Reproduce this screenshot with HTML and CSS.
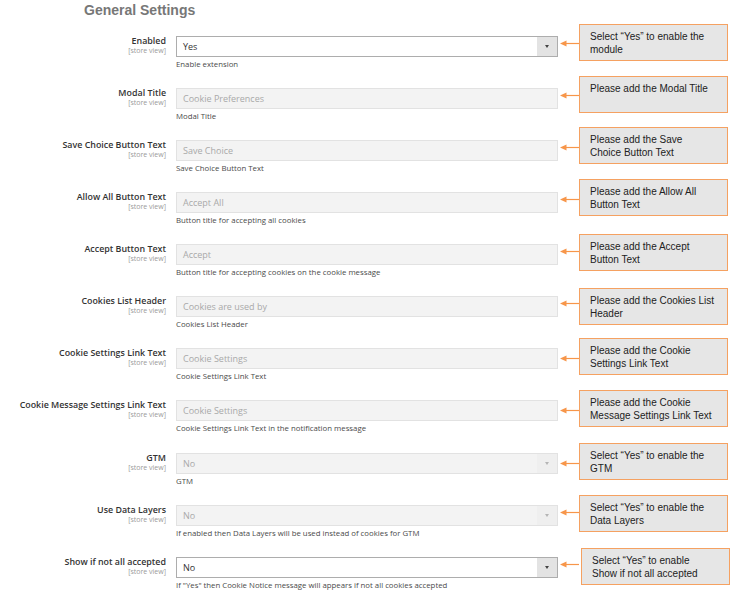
FILE: index.html
```html
<!DOCTYPE html>
<html>
<head>
<meta charset="utf-8">
<link rel="stylesheet" href="styles.css">
</head>
<body>
<div class="page">
  <h2 class="title">General Settings</h2>

  <div class="row">
    <div class="label"><div class="name">Enabled</div><div class="scope">[store view]</div></div>
    <div class="control">
      <div class="field select active"><span class="value">Yes</span><span class="btn"><span class="caret"></span></span></div>
      <div class="note">Enable extension</div>
    </div>
    <svg class="arrow" width="20" height="9" viewBox="0 0 20 9"><line x1="6" y1="4.5" x2="20" y2="4.5"/><polygon points="1,4.5 7.5,1.5 7.5,7.5"/></svg>
    <div class="callout up">Select “Yes” to enable the module</div>
  </div>

  <div class="row">
    <div class="label"><div class="name">Modal Title</div><div class="scope">[store view]</div></div>
    <div class="control">
      <div class="field"><span class="value">Cookie Preferences</span></div>
      <div class="note">Modal Title</div>
    </div>
    <svg class="arrow" width="20" height="9" viewBox="0 0 20 9"><line x1="6" y1="4.5" x2="20" y2="4.5"/><polygon points="1,4.5 7.5,1.5 7.5,7.5"/></svg>
    <div class="callout up">Please add the Modal Title</div>
  </div>

  <div class="row">
    <div class="label"><div class="name">Save Choice Button Text</div><div class="scope">[store view]</div></div>
    <div class="control">
      <div class="field"><span class="value">Save Choice</span></div>
      <div class="note">Save Choice Button Text</div>
    </div>
    <svg class="arrow" width="20" height="9" viewBox="0 0 20 9"><line x1="6" y1="4.5" x2="20" y2="4.5"/><polygon points="1,4.5 7.5,1.5 7.5,7.5"/></svg>
    <div class="callout up2">Please add the Save Choice Button Text</div>
  </div>

  <div class="row">
    <div class="label"><div class="name">Allow All Button Text</div><div class="scope">[store view]</div></div>
    <div class="control">
      <div class="field"><span class="value">Accept All</span></div>
      <div class="note">Button title for accepting all cookies</div>
    </div>
    <svg class="arrow" width="20" height="9" viewBox="0 0 20 9"><line x1="6" y1="4.5" x2="20" y2="4.5"/><polygon points="1,4.5 7.5,1.5 7.5,7.5"/></svg>
    <div class="callout up2">Please add the Allow All Button Text</div>
  </div>

  <div class="row">
    <div class="label"><div class="name">Accept Button Text</div><div class="scope">[store view]</div></div>
    <div class="control">
      <div class="field"><span class="value">Accept</span></div>
      <div class="note">Button title for accepting cookies on the cookie message</div>
    </div>
    <svg class="arrow" width="20" height="9" viewBox="0 0 20 9"><line x1="6" y1="4.5" x2="20" y2="4.5"/><polygon points="1,4.5 7.5,1.5 7.5,7.5"/></svg>
    <div class="callout">Please add the Accept Button Text</div>
  </div>

  <div class="row">
    <div class="label"><div class="name">Cookies List Header</div><div class="scope">[store view]</div></div>
    <div class="control">
      <div class="field"><span class="value">Cookies are used by</span></div>
      <div class="note">Cookies List Header</div>
    </div>
    <svg class="arrow" width="20" height="9" viewBox="0 0 20 9"><line x1="6" y1="4.5" x2="20" y2="4.5"/><polygon points="1,4.5 7.5,1.5 7.5,7.5"/></svg>
    <div class="callout down">Please add the Cookies List Header</div>
  </div>

  <div class="row">
    <div class="label"><div class="name">Cookie Settings Link Text</div><div class="scope">[store view]</div></div>
    <div class="control">
      <div class="field"><span class="value">Cookie Settings</span></div>
      <div class="note">Cookie Settings Link Text</div>
    </div>
    <svg class="arrow low" width="20" height="9" viewBox="0 0 20 9"><line x1="6" y1="4.5" x2="20" y2="4.5"/><polygon points="1,4.5 7.5,1.5 7.5,7.5"/></svg>
    <div class="callout">Please add the Cookie Settings Link Text</div>
  </div>

  <div class="row">
    <div class="label"><div class="name">Cookie Message Settings Link Text</div><div class="scope">[store view]</div></div>
    <div class="control">
      <div class="field"><span class="value">Cookie Settings</span></div>
      <div class="note">Cookie Settings Link Text in the notification message</div>
    </div>
    <svg class="arrow low" width="20" height="9" viewBox="0 0 20 9"><line x1="6" y1="4.5" x2="20" y2="4.5"/><polygon points="1,4.5 7.5,1.5 7.5,7.5"/></svg>
    <div class="callout">Please add the Cookie Message Settings Link Text</div>
  </div>

  <div class="row gap">
    <div class="label"><div class="name">GTM</div><div class="scope">[store view]</div></div>
    <div class="control">
      <div class="field select"><span class="value">No</span><span class="btn"><span class="caret"></span></span></div>
      <div class="note">GTM</div>
    </div>
    <svg class="arrow low" width="20" height="9" viewBox="0 0 20 9"><line x1="6" y1="4.5" x2="20" y2="4.5"/><polygon points="1,4.5 7.5,1.5 7.5,7.5"/></svg>
    <div class="callout">Select “Yes” to enable the GTM</div>
  </div>

  <div class="row">
    <div class="label"><div class="name">Use Data Layers</div><div class="scope">[store view]</div></div>
    <div class="control">
      <div class="field select"><span class="value">No</span><span class="btn"><span class="caret"></span></span></div>
      <div class="note">If enabled then Data Layers will be used instead of cookies for GTM</div>
    </div>
    <svg class="arrow" width="20" height="9" viewBox="0 0 20 9"><line x1="6" y1="4.5" x2="20" y2="4.5"/><polygon points="1,4.5 7.5,1.5 7.5,7.5"/></svg>
    <div class="callout">Select “Yes” to enable the Data Layers</div>
  </div>

  <div class="row">
    <div class="label"><div class="name">Show if not all accepted</div><div class="scope">[store view]</div></div>
    <div class="control">
      <div class="field select active"><span class="value">No</span><span class="btn"><span class="caret"></span></span></div>
      <div class="note">If "Yes" then Cookie Notice message will appears if not all cookies accepted</div>
    </div>
    <svg class="arrow" width="20" height="9" viewBox="0 0 20 9"><line x1="6" y1="4.5" x2="20" y2="4.5"/><polygon points="1,4.5 7.5,1.5 7.5,7.5"/></svg>
    <div class="callout shift">Select “Yes” to enable Show if not all accepted</div>
  </div>
</div>
</body>
</html>
```

FILE: styles.css
```css
html, body {
  margin: 0;
  padding: 0;
  background: #ffffff;
}

.page {
  width: 750px;
  height: 613px;
  overflow: hidden;
  font-family: "Open Sans", "Liberation Sans", sans-serif;
}

.title {
  margin: 0 0 18px 0;
  padding: 2px 0 0 84px;
  height: 16px;
  font-family: "Liberation Sans", Arial, sans-serif;
  font-size: 14px;
  line-height: 16px;
  font-weight: bold;
  color: #777777;
}

.row {
  display: flex;
  align-items: flex-start;
  height: 52px;
}

.row.gap {
  margin-top: 1px;
}

.label {
  width: 166px;
  flex: none;
  text-align: right;
  margin-top: -1px;
}

.name {
  font-size: 8.9px;
  line-height: 11px;
  font-weight: 600;
  color: #333333;
  white-space: nowrap;
}

.scope {
  font-size: 7px;
  line-height: 7px;
  color: #9a9a9a;
  margin-top: 1px;
}

.control {
  width: 382px;
  flex: none;
  margin-left: 10px;
}

.field {
  box-sizing: border-box;
  height: 21px;
  display: flex;
  align-items: center;
  background: #f3f3f3;
  border: 1px solid #e2e2e2;
  font-size: 9px;
  color: #a9a9a9;
}

.field.active {
  background: #ffffff;
  border-color: #adadad;
  color: #333333;
}

.value {
  flex: 1;
  padding-left: 6px;
  white-space: nowrap;
}

.btn {
  width: 20px;
  align-self: stretch;
  display: flex;
  align-items: center;
  justify-content: center;
  background: #efefef;
}

.field.active .btn {
  background: #e3e3e3;
}

.caret {
  width: 0;
  height: 0;
  border-left: 2.5px solid transparent;
  border-right: 2.5px solid transparent;
  border-top: 3px solid #b5b5b5;
}

.field.active .caret {
  border-top-color: #444444;
}

.note {
  margin-top: 2px;
  font-size: 7.8px;
  line-height: 10px;
  color: #4a4a4a;
  white-space: nowrap;
}

.arrow {
  flex: none;
  margin-top: 3px;
  margin-left: 1px;
}

.arrow.low {
  margin-top: 6px;
}

.arrow line {
  stroke: #f7964a;
  stroke-width: 1.2;
}

.arrow polygon {
  fill: #f7964a;
}

.callout {
  box-sizing: border-box;
  flex: none;
  width: 149px;
  height: 37px;
  margin-top: -10px;
  padding: 5px 12px 0 10px;
  background: #e6e6e6;
  border: 1px solid #f5a161;
  font-family: "Liberation Sans", Arial, sans-serif;
  font-size: 10px;
  line-height: 13px;
  color: #222222;
}

.callout.up {
  margin-top: -12px;
}

.callout.up2 {
  margin-top: -13px;
}

.callout.down {
  margin-top: -8px;
}

.callout.shift {
  margin-left: 2px;
  margin-top: -9px;
}
```
